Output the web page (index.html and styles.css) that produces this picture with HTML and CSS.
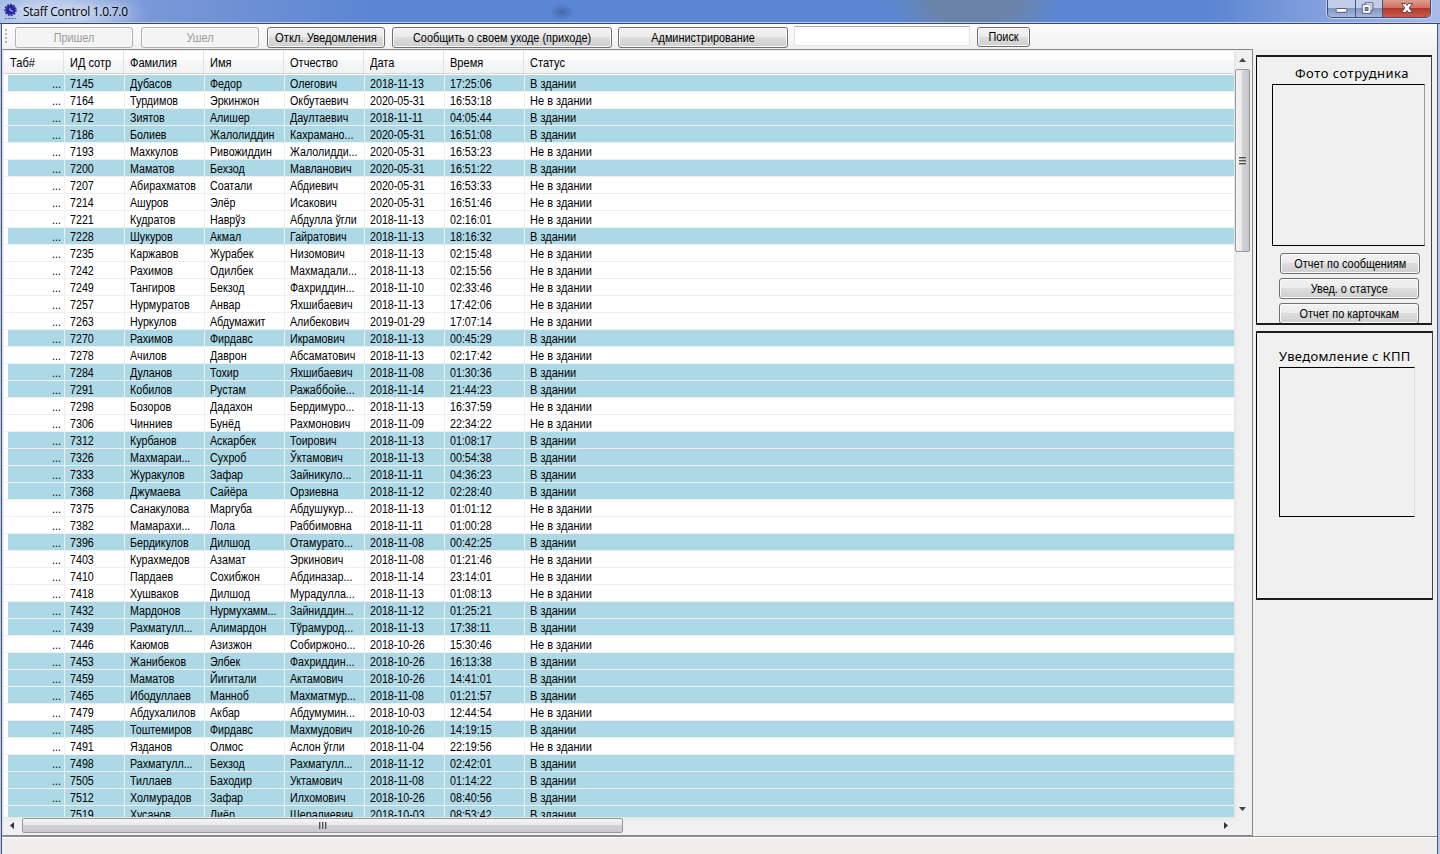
FILE: index.html
```html
<!DOCTYPE html>
<html lang="ru">
<head>
<meta charset="utf-8">
<title>Staff Control 1.0.7.0</title>
<link rel="stylesheet" href="styles.css">
</head>
<body>
<div class="window">
  <header class="titlebar">
    <svg class="app-icon" viewBox="0 0 13 17"><circle cx="6.5" cy="8" r="5" fill="#2a27a0"/><circle cx="6.5" cy="8" r="5.500" fill="none" stroke="#2a27a0" stroke-width="1.400" stroke-dasharray="2 1.100"/><path d="M6 6v2.500h2v1.500" fill="none" stroke="#a9b4ea" stroke-width=".9"/><path d="M1 16.500h11" stroke="#5660bd" stroke-dasharray="2 1.300"/></svg>
    <span class="title">Staff Control 1.0.7.0</span>
    <div class="controls">
      <span class="ctl"><svg viewBox="0 0 28 17"><rect x="8.500" y="8.500" width="11" height="4" rx=".8" fill="#fff" stroke="#535a70"/></svg></span>
      <span class="ctl ctl-max"><svg viewBox="0 0 27 17"><path d="M9.500 2.500h8v8h-2v3h-9v-9h3z" fill="#fff" stroke="#535a70"/><path d="M9.500 4.500h6v6" fill="none" stroke="#9098ac"/><rect x="9.500" y="7.500" width="3" height="3" fill="#8794bb" stroke="#535a70"/></svg></span>
      <span class="ctl ctl-close"><svg viewBox="0 0 47 17"><path d="M18.500 3.500h4l1.500 2 1.500-2h4l-3.300 4.500 3.300 4.500h-4l-1.500-2-1.500 2h-4l3.300-4.500z" fill="#fff" stroke="#5c4858"/></svg></span>
    </div>
  </header>
  <div class="client">
    <div class="toolbar">
      <span class="grip"></span>
      <button class="btn w118" disabled><span>Пришел</span></button>
      <button class="btn w118" disabled><span>Ушел</span></button>
      <button class="btn w118 mute"><span>Откл. Уведомления</span></button>
      <button class="btn w220"><span>Сообщить о своем уходе (приходе)</span></button>
      <button class="btn w170"><span>Администрирование</span></button>
      <input class="search" type="text">
      <button class="btn find"><span>Поиск</span></button>
    </div>
    <div class="content">
      <div class="list">
        <div class="view">
          <div class="table">
            <div class="head"><span><b>Таб#</b></span><span><b>ИД сотр</b></span><span><b>Фамилия</b></span><span><b>Имя</b></span><span><b>Отчество</b></span><span><b>Дата</b></span><span><b>Время</b></span><span><b>Статус</b></span></div>
            <div class="rows" id="rows"></div>
          </div>
          <div class="vscroll">
            <svg class="arrow-v" viewBox="0 0 17 17"><path d="M5 11l3.500-4 3.500 4z" fill="#444"/></svg>
            <div class="thumb-v"><i></i><i></i><i></i></div>
            <svg class="arrow-v end" viewBox="0 0 17 17"><path d="M5 7l3.500 4 3.500-4z" fill="#444"/></svg>
          </div>
        </div>
        <div class="hscroll">
          <svg class="arrow-h" viewBox="0 0 17 17"><path d="M10 5v7l-4-3.500z" fill="#333"/></svg>
          <div class="thumb-h"><i></i><i></i><i></i></div>
          <svg class="arrow-h end" viewBox="0 0 17 17"><path d="M7 5v7l4-3.500z" fill="#333"/></svg>
        </div>
      </div>
      <aside class="side">
        <section class="panel photo">
          <h2>Фото сотрудника</h2>
          <div class="frame photo-frame"></div>
          <button class="btn w140 first"><span>Отчет по сообщениям</span></button>
          <button class="btn w140"><span>Увед. о статусе</span></button>
          <button class="btn w140"><span>Отчет по карточкам</span></button>
        </section>
        <section class="panel notice">
          <h2>Уведомление с КПП</h2>
          <div class="frame notice-frame"></div>
        </section>
      </aside>
    </div>
    <footer class="status"></footer>
  </div>
</div>
<script src="app.js"></script>
</body>
</html>
```
FILE: styles.css
```css
* { box-sizing: border-box; }
body { margin: 0; overflow: hidden; font-family: "Liberation Sans", Arial, sans-serif; font-size: 12px; color: #000; }
.window { width: 1440px; height: 854px; display: flex; flex-direction: column; background: #b4c8e8; }
.titlebar { height: 24px; flex: none; display: flex; align-items: flex-start; padding-left: 4px; border-bottom: 1px solid #35466f; box-shadow: inset 0 -1px #b9cbee;
  background: radial-gradient(ellipse 100px 32px at 50px 14px, #bccdec 0 35%, transparent), radial-gradient(ellipse 12px 8px at 562px 12px, #4468ad, transparent), radial-gradient(ellipse 85px 44px at 975px 0, #6b83a8 0 50%, transparent), linear-gradient(90deg, #88a5dc 0, #7796d6 12%, #5b86d2 26%, #5b86d2 84%, #89a4de 93%, #a8bce8); }
.app-icon { width: 13px; height: 17px; margin-top: 2px; }
.title { margin: 4px 0 0 6px; font: 12px/16px "Open Sans", sans-serif; letter-spacing: -.26px; text-shadow: 0 0 6px #fff; }
.controls { margin: 0 9px 0 auto; display: flex; width: 104px; height: 18px; border: 1px solid #3d4d75; border-top: 0; border-radius: 0 0 5px 5px; overflow: hidden; box-shadow: 0 0 0 1px #c4d3f0; }
.ctl { width: 28px; border-right: 1px solid #445783; background: linear-gradient(#c2cee7 0 45%, #8094bf 47%, #a4b8df); }
.ctl-max { width: 27px; }
.ctl-close { width: 47px; border: 0; background: linear-gradient(#dc9d90 0, #cf7363 45%, #b23524 47%, #c75d49); }
.ctl svg { display: block; height: 17px; width: 100%; }
.client { flex: 1; margin: 0 2px 0 1px; border-left: 1px solid #485779; border-right: 1px solid #485779; background: #f0f0f0; display: flex; flex-direction: column; min-height: 0; }
.toolbar { height: 25px; flex: none; display: flex; align-items: flex-start; padding: 3px 0 0 3px; background: linear-gradient(#fdfdfd, #f1f1f1); }
.grip { width: 2px; height: 15px; margin: 2px 8px 0 0; background: repeating-linear-gradient(#b7b7b7 0 2px, transparent 2px 4px); }
.btn { font: 12px "Liberation Sans", Arial, sans-serif; color: #000; height: 21px; padding: 0; margin: 0 8px 0 0; flex: none; white-space: nowrap; border: 1px solid #707070; border-radius: 3px; box-shadow: inset 0 0 0 1px #fafafa; background: linear-gradient(#f2f2f2, #ebebeb 49%, #dddddd 50%, #cfcfcf); }
/* condensed button captions */
.btn span { display: block; width: 112%; margin-left: -6%; transform: scaleX(.905); }
.btn:disabled { color: #9b9b9b; background: #f4f4f4; border-color: #adb2b5; }
.w118 { width: 118px; }
.mute { margin-right: 7px; }
.mute span { transform: scaleX(.935); }
.w220 { width: 220px; margin-right: 6px; }
.w170 { width: 170px; margin-right: 6px; }
.w140 { width: 140px; }
.search { width: 176px; height: 20px; margin: -1px 7px 0 0; padding: 0; border: 1px solid #e2e3ea; border-top-color: #abadb3; background: #fff; }
.find { width: 53px; height: 20px; }
.content { flex: 1; display: flex; min-height: 0; }
.list { width: 1251px; height: 787px; flex: none; border: 1px solid #828790; border-left-color: #d8dbe0; background: #f0f0f0; display: flex; flex-direction: column; padding: 1px; }
.view { height: 766px; flex: none; display: flex; overflow: hidden; background: #fff; }
.table { width: 1230px; flex: none; }
.head { height: 23px; display: grid; grid-template-columns: 60px 60px 80px 80px 80px 80px 80px 1fr; line-height: 24px; border-bottom: 1px solid #d5d5d5; background: linear-gradient(#fff 0 9px, #f7f8fa 9px, #f1f2f4); }
.head span { height: 22px; padding-left: 6px; border-right: 1px solid #e0e2e5; white-space: nowrap; }
.head span:last-child { border: 0; }
.head b { display: inline-block; font-weight: 400; transform: scaleX(.92); transform-origin: 0 50%; }
.rows { padding-top: 1px; }
.row { height: 17px; display: grid; grid-template-columns: 61px 60px 80px 80px 80px 80px 80px 1fr; line-height: 18px; border-bottom: 1px solid #f0f0f0; background: #fff; }
.row.in { background: linear-gradient(90deg, #fff 4px, #add8e6 4px); }
.row span { height: 16px; padding-left: 5px; border-right: 1px solid #f0f0f0; white-space: nowrap; }
.row b { display: inline-block; height: 16px; font-weight: 400; transform: scaleX(.89); transform-origin: 0 50%; }
.row span:first-child { text-align: right; padding-right: 3px; }
.row span:first-child b { transform-origin: 100% 50%; }
.row span:last-child { border: 0; }
.row span:last-child b { transform: scaleX(.92); }
.vscroll { width: 17px; display: flex; flex-direction: column; background: linear-gradient(90deg, #e5e5e5, #f0f0f0 20%, #f0f0f0); }
.arrow-v { width: 17px; height: 17px; flex: none; }
.arrow-v.end { margin-top: auto; }
.thumb-v { width: 15px; height: 183px; margin: 1px 0 0 1px; border: 1px solid #979797; border-radius: 2px; background: linear-gradient(90deg, #f5f5f5, #e9e9ea 45%, #d2d2d6 50%, #c8c8cc); display: flex; flex-direction: column; align-items: center; justify-content: center; gap: 1px; }
.thumb-v i { width: 7px; height: 2px; border-top: 1px solid #555; border-bottom: 1px solid #aaa; }
.hscroll { width: 1230px; height: 17px; display: flex; background: linear-gradient(#e5e5e5, #f0f0f0 20%, #f0f0f0); }
.arrow-h { width: 17px; height: 17px; flex: none; }
.arrow-h.end { margin-left: auto; }
.thumb-h { width: 601px; height: 15px; margin: 1px 0 0 1px; border: 1px solid #979797; border-radius: 2px; background: linear-gradient(#f5f5f5, #e9e9ea 45%, #d2d2d6 50%, #c8c8cc); display: flex; align-items: center; justify-content: center; gap: 1px; }
.thumb-h i { width: 2px; height: 7px; border-left: 1px solid #555; border-right: 1px solid #aaa; }
.side { padding: 6px 0 0 3px; display: flex; flex-direction: column; gap: 6px; }
.panel { border: 1px solid #000; border-top: 2px solid #1c1c1c; border-bottom: 2px solid #1c1c1c; border-right-color: #444; overflow: hidden; }
.photo { width: 176px; height: 270px; padding-left: 15px; }
.notice { width: 177px; height: 269px; padding-left: 22px; }
.panel h2 { margin: 0; font: 13px/16px "Noto Sans", sans-serif; white-space: nowrap; }
.photo h2 { padding: 8px 0 0 23px; height: 27px; letter-spacing: .5px; }
.notice h2 { padding-top: 15px; height: 34px; letter-spacing: .32px; }
.frame { border: 1px solid #000; }
.photo-frame { width: 153px; height: 162px; border-right-color: #999; }
.notice-frame { width: 136px; height: 150px; border-right-color: #e0e0e0; }
.panel .btn { display: block; margin: 4px 0 0 7px; }
.panel .btn.first { margin: 7px 0 0 8px; }
.status { height: 18px; flex: none; border-top: 1px solid #8c8c94; box-shadow: inset 0 1px #fff; background: #f0eded; }
```
FILE: app.js
```js
// number | surname | name | patronymic | date | time | 1 when inside the building
const staff = `7145|Дубасов|Федор|Олегович|2018-11-13|17:25:06|1
7164|Турдимов|Эркинжон|Окбутаевич|2020-05-31|16:53:18|0
7172|Зиятов|Алишер|Даултаевич|2018-11-11|04:05:44|1
7186|Болиев|Жалолиддин|Кахрамано...|2020-05-31|16:51:08|1
7193|Махкулов|Ривожиддин|Жалолидди...|2020-05-31|16:53:23|0
7200|Маматов|Бехзод|Мавланович|2020-05-31|16:51:22|1
7207|Абирахматов|Соатали|Абдиевич|2020-05-31|16:53:33|0
7214|Ашуров|Элёр|Исакович|2020-05-31|16:51:46|0
7221|Кудратов|Наврўз|Абдулла ўгли|2018-11-13|02:16:01|0
7228|Шукуров|Акмал|Гайратович|2018-11-13|18:16:32|1
7235|Каржавов|Журабек|Низомович|2018-11-13|02:15:48|0
7242|Рахимов|Одилбек|Махмадали...|2018-11-13|02:15:56|0
7249|Тангиров|Бекзод|Фахриддин...|2018-11-10|02:33:46|0
7257|Нурмуратов|Анвар|Яхшибаевич|2018-11-13|17:42:06|0
7263|Нуркулов|Абдумажит|Алибекович|2019-01-29|17:07:14|0
7270|Рахимов|Фирдавс|Икрамович|2018-11-13|00:45:29|1
7278|Ачилов|Даврон|Абсаматович|2018-11-13|02:17:42|0
7284|Дуланов|Тохир|Яхшибаевич|2018-11-08|01:30:36|1
7291|Кобилов|Рустам|Ражаббойе...|2018-11-14|21:44:23|1
7298|Бозоров|Дадахон|Бердимуро...|2018-11-13|16:37:59|0
7306|Чинниев|Бунёд|Рахмонович|2018-11-09|22:34:22|0
7312|Курбанов|Аскарбек|Тоирович|2018-11-13|01:08:17|1
7326|Махмараи...|Сухроб|Ўктамович|2018-11-13|00:54:38|1
7333|Журакулов|Зафар|Зайникуло...|2018-11-11|04:36:23|1
7368|Джумаева|Сайёра|Орзиевна|2018-11-12|02:28:40|1
7375|Санакулова|Маргуба|Абдушукур...|2018-11-13|01:01:12|0
7382|Мамарахи...|Лола|Раббимовна|2018-11-11|01:00:28|0
7396|Бердикулов|Дилшод|Отамурато...|2018-11-08|00:42:25|1
7403|Курахмедов|Азамат|Эркинович|2018-11-08|01:21:46|0
7410|Пардаев|Сохибжон|Абдиназар...|2018-11-14|23:14:01|0
7418|Хушваков|Дилшод|Мурадулла...|2018-11-13|01:08:13|0
7432|Мардонов|Нурмухамм...|Зайниддин...|2018-11-12|01:25:21|1
7439|Рахматулл...|Алимардон|Тўрамурод...|2018-11-13|17:38:11|1
7446|Каюмов|Азизжон|Собиржоно...|2018-10-26|15:30:46|0
7453|Жанибеков|Элбек|Фахриддин...|2018-10-26|16:13:38|1
7459|Маматов|Йигитали|Актамович|2018-10-26|14:41:01|1
7465|Ибодуллаев|Манноб|Махматмур...|2018-11-08|01:21:57|1
7479|Абдухалилов|Акбар|Абдумумин...|2018-10-03|12:44:54|0
7485|Тоштемиров|Фирдавс|Махмудович|2018-10-26|14:19:15|1
7491|Язданов|Олмос|Аслон ўгли|2018-11-04|22:19:56|0
7498|Рахматулл...|Бехзод|Рахматулл...|2018-11-12|02:42:01|1
7505|Тиллаев|Баходир|Уктамович|2018-11-08|01:14:22|1
7512|Холмурадов|Зафар|Илхомович|2018-10-26|08:40:56|1
7519|Хусанов|Лиёр|Шералиевич|2018-10-03|08:53:42|1`;

const rows = document.getElementById('rows');
for (const line of staff.split('\n')) {
  const fields = line.split('|');
  const inside = fields.pop() === '1';
  const row = document.createElement('div');
  row.className = inside ? 'row in' : 'row';
  for (const text of ['...', ...fields, inside ? 'В здании' : 'Не в здании']) {
    const cell = document.createElement('span');
    const label = document.createElement('b');
    label.textContent = text;
    cell.append(label);
    row.append(cell);
  }
  rows.append(row);
}
```
